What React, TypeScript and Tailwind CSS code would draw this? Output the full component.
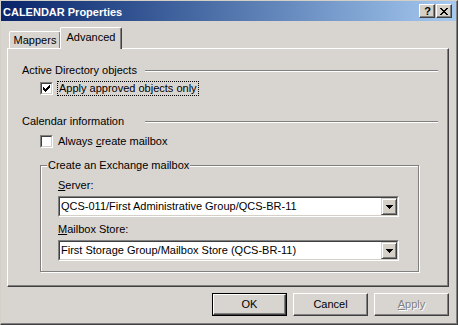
import React from "react";

const BG = "bg-[#d8d4d0]";

function CheckMark() {
  const px: [number, number][] = [
    [6, 0], [5, 1], [6, 1], [0, 2], [4, 2], [5, 2], [6, 2], [0, 3], [1, 3], [3, 3], [4, 3], [5, 3],
    [0, 4], [1, 4], [2, 4], [3, 4], [4, 4], [1, 5], [2, 5], [3, 5], [2, 6],
  ];
  return (
    <svg width="7" height="7" viewBox="0 0 7 7" shapeRendering="crispEdges">
      {px.map(([x, y], i) => (
        <rect key={i} x={x} y={y} width="1" height="1" fill="#000" />
      ))}
    </svg>
  );
}

function CheckBox({ checked }: { checked?: boolean }) {
  return (
    <div className="w-[13px] h-[13px] shrink-0 border border-t-[#808080] border-l-[#808080] border-r-white border-b-white">
      <div className="w-full h-full bg-white border border-t-[#404040] border-l-[#404040] border-r-[#d4d0c8] border-b-[#d4d0c8] flex items-center justify-center">
        {checked && <CheckMark />}
      </div>
    </div>
  );
}

function Arrow() {
  return (
    <svg width="7" height="4" viewBox="0 0 7 4" shapeRendering="crispEdges">
      <rect x="0" y="0" width="7" height="1" fill="#000" />
      <rect x="1" y="1" width="5" height="1" fill="#000" />
      <rect x="2" y="2" width="3" height="1" fill="#000" />
      <rect x="3" y="3" width="1" height="1" fill="#000" />
    </svg>
  );
}

function Combo({ text }: { text: string }) {
  return (
    <div className="w-[341px] h-[21px] border border-t-[#808080] border-l-[#808080] border-r-white border-b-white">
      <div className="w-full h-full bg-white flex border border-t-[#404040] border-l-[#404040] border-r-[#d4d0c8] border-b-[#d4d0c8]">
        <div className="flex-1 flex items-center pl-[1px] leading-[13px] whitespace-nowrap">{text}</div>
        <div className="w-[16px] h-[17px] bg-[#d4d0c8] border border-t-[#d4d0c8] border-l-[#d4d0c8] border-r-[#404040] border-b-[#404040] shadow-[inset_1px_1px_0_#fff,inset_-1px_-1px_0_#808080] flex items-center justify-center">
          <Arrow />
        </div>
      </div>
    </div>
  );
}

function Button({ children, def, disabled }: { children: React.ReactNode; def?: boolean; disabled?: boolean }) {
  const inner = (
    <div
      className={`w-full h-full flex items-center justify-center border border-t-white border-l-white border-r-[#404040] border-b-[#404040] shadow-[inset_-1px_-1px_0_#808080] ${
        disabled ? "text-[#808080] [text-shadow:1px_1px_0_#fff]" : "text-black"
      }`}
    >
      {children}
    </div>
  );
  return def ? (
    <div className="w-[75px] h-[23px] border border-black">{inner}</div>
  ) : (
    <div className="w-[75px] h-[23px]">{inner}</div>
  );
}

function SectionHeader({ label }: { label: string }) {
  return (
    <div className="flex items-center h-[13px]">
      <div className="w-[123px] leading-[13px] whitespace-nowrap">{label}</div>
      <div className="flex-1 h-[2px] border-t border-t-[#808080] border-b border-b-white" />
    </div>
  );
}

export default function App() {
  return (
    <div className="w-[459px] h-[325px] flex bg-white font-['Liberation_Sans',Arial,sans-serif] text-[11px] text-black">
      <div className={`w-[458px] h-[325px] ${BG} border-l border-t border-l-[#d4d0c8] border-t-[#d4d0c8] border-r border-b border-r-[#404040] border-b-[#404040] shadow-[inset_-1px_-1px_0_#808080] flex flex-col`}>
        {/* Title bar */}
        <div className="h-[20px] mr-[1px] flex items-center bg-gradient-to-r from-[#0a246a] to-[#a6caf0]">
          <div className="flex-1 pl-[2px] pt-[2px] text-white font-bold text-[11px] leading-[14px] whitespace-nowrap">
            CALENDAR Properties
          </div>
          <div className="flex items-center gap-[1px] mr-[4px]">
            <div className="w-[16px] h-[14px] bg-[#d4d0c8] border border-t-white border-l-white border-r-[#404040] border-b-[#404040] shadow-[inset_-1px_-1px_0_#808080] flex items-center justify-center">
              <span className="font-bold text-[11px] leading-[11px] pl-[1px]">?</span>
            </div>
            <div className="w-[16px] h-[14px] bg-[#d4d0c8] border border-t-white border-l-white border-r-[#404040] border-b-[#404040] shadow-[inset_-1px_-1px_0_#808080] flex items-center justify-center">
              <svg width="8" height="7" viewBox="0 0 8 7" shapeRendering="crispEdges">
                <path d="M0 0h2v1h-2z M6 0h2v1h-2z M1 1h2v1h-2z M5 1h2v1h-2z M2 2h4v1h-4z M3 3h2v1h-2z M2 4h4v1h-4z M1 5h2v1h-2z M5 5h2v1h-2z M0 6h2v1h-2z M6 6h2v1h-2z" fill="#000" />
              </svg>
            </div>
          </div>
        </div>

        {/* Body */}
        <div className="pl-[6px] pr-[7px] flex flex-col">
          {/* Tabs */}
          <div className="mt-[6px] h-[21px] flex items-end pl-[2px]">
            <div className="w-[52px] h-[17px] rounded-t-[2px] border-t border-l border-t-white border-l-white border-r border-r-[#404040] shadow-[inset_-1px_0_0_#808080] flex items-center justify-center leading-[13px]">
              Mappers
            </div>
            <div className={`relative z-10 -ml-[1px] -mb-[1px] w-[62px] h-[22px] ${BG} rounded-t-[2px] border-t border-l border-t-white border-l-white border-r border-r-[#404040] shadow-[inset_-1px_0_0_#808080] flex items-center justify-center leading-[13px] pb-[2px]`}>
              Advanced
            </div>
          </div>

          {/* Panel */}
          <div className="w-[442px] h-[239px] border-t border-l border-t-white border-l-white border-r border-b border-r-[#404040] border-b-[#404040] shadow-[inset_-1px_-1px_0_#808080] pl-[14px] pr-[10px] flex flex-col">
            <div className="mt-[15px]">
              <SectionHeader label="Active Directory objects" />
            </div>
            <div className="mt-[4px] h-[15px] flex items-center ml-[18px]">
              <CheckBox checked />
              <span className="ml-[4px] border border-dotted border-black px-[1px] leading-[13px] whitespace-nowrap">
                Apply approved objects only
              </span>
            </div>
            <div className="mt-[19px]">
              <SectionHeader label="Calendar information" />
            </div>
            <div className="mt-[6px] h-[15px] flex items-center ml-[18px]">
              <CheckBox />
              <span className="ml-[5px] leading-[13px] whitespace-nowrap">
                Always <u>c</u>reate mailbox
              </span>
            </div>

            {/* Group box */}
            <div className="relative mt-[16px] ml-[18px] w-[379px] h-[107px] border border-[#808080] shadow-[1px_1px_0_#fff,inset_1px_1px_0_#fff] pl-[17px] pt-[13px] flex flex-col">
              <div className={`absolute left-[6px] -top-[7px] px-[1px] ${BG} leading-[13px] whitespace-nowrap`}>
                Create an Exchange mailbox
              </div>
              <div className="leading-[13px]">
                <u>S</u>erver:
              </div>
              <div className="mt-[4px]">
                <Combo text="QCS-011/First Administrative Group/QCS-BR-11" />
              </div>
              <div className="mt-[6px] leading-[13px]">
                <u>M</u>ailbox Store:
              </div>
              <div className="mt-[4px]">
                <Combo text="First Storage Group/Mailbox Store (QCS-BR-11)" />
              </div>
            </div>
          </div>

          {/* Buttons */}
          <div className="mt-[6px] w-[442px] flex justify-end gap-[6px]">
            <Button def>OK</Button>
            <Button>Cancel</Button>
            <Button disabled>
              <span>
                <u>A</u>pply
              </span>
            </Button>
          </div>
        </div>
      </div>
    </div>
  );
}
